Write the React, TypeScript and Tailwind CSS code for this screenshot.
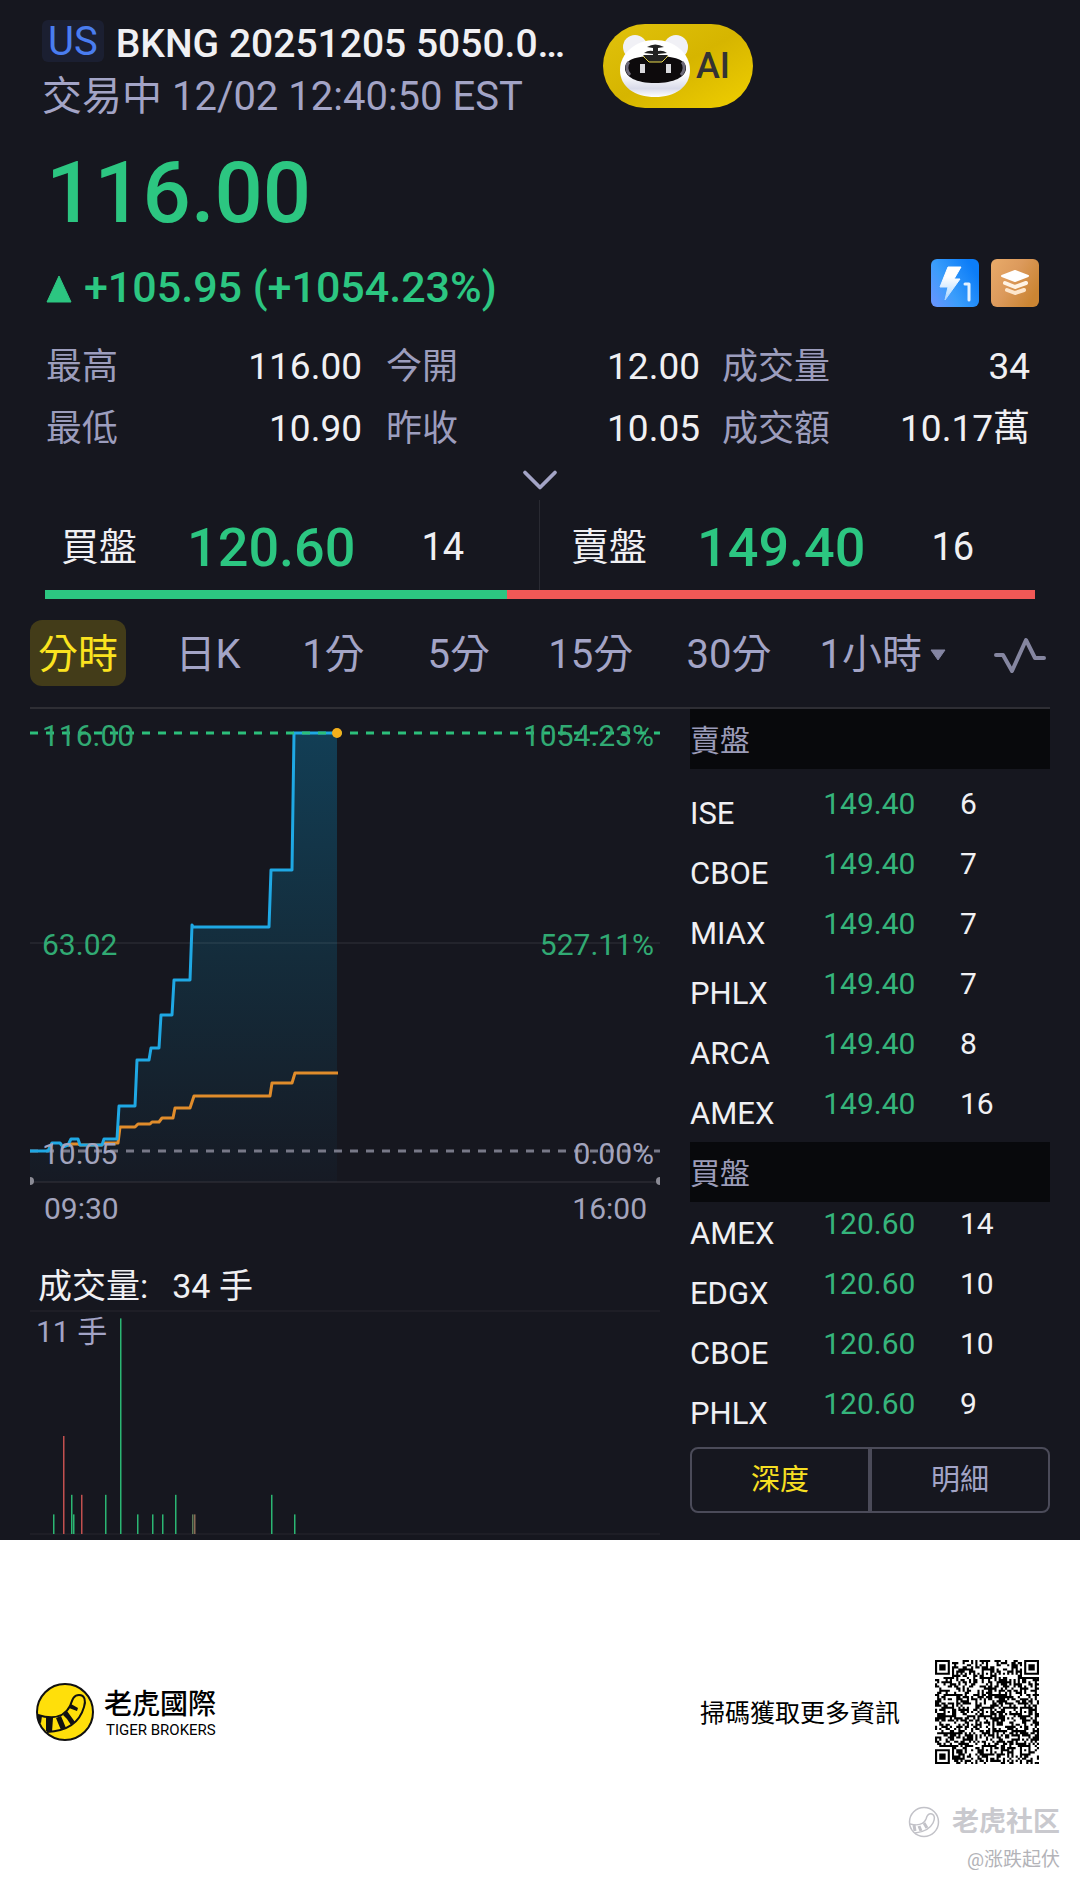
import { ChevronDown } from 'lucide-react';

const stats = [
  [
    { label: '最高', value: '116.00' },
    { label: '今開', value: '12.00' },
    { label: '成交量', value: '34' },
  ],
  [
    { label: '最低', value: '10.90' },
    { label: '昨收', value: '10.05' },
    { label: '成交額', value: '10.17萬' },
  ],
];

const statPadding = ['p-0 pr-3', 'p-0 pl-3 pr-0.5', 'p-0 pl-5'];

const bid = { label: '買盤', price: '120.60', size: 14 };
const ask = { label: '賣盤', price: '149.40', size: 16 };

const periods = ['日K', '1分', '5分', '15分', '30分'];

const asks = [
  { venue: 'ISE', price: '149.40', size: 6 },
  { venue: 'CBOE', price: '149.40', size: 7 },
  { venue: 'MIAX', price: '149.40', size: 7 },
  { venue: 'PHLX', price: '149.40', size: 7 },
  { venue: 'ARCA', price: '149.40', size: 8 },
  { venue: 'AMEX', price: '149.40', size: 16 },
];

const bids = [
  { venue: 'AMEX', price: '120.60', size: 14 },
  { venue: 'EDGX', price: '120.60', size: 10 },
  { venue: 'CBOE', price: '120.60', size: 10 },
  { venue: 'PHLX', price: '120.60', size: 9 },
];

const GREEN = '#2bb673';
const RED = '#c2504f';

const volumes = [
  { x: 23, lots: 1, color: GREEN },
  { x: 33, lots: 5, color: RED },
  { x: 41, lots: 2, color: GREEN },
  { x: 43, lots: 1, color: GREEN },
  { x: 51, lots: 2, color: RED },
  { x: 75, lots: 2, color: GREEN },
  { x: 90, lots: 11, color: GREEN },
  { x: 107, lots: 1, color: GREEN },
  { x: 122, lots: 1, color: GREEN },
  { x: 132, lots: 1, color: GREEN },
  { x: 145, lots: 2, color: GREEN },
  { x: 162, lots: 1, color: '#5d7a58' },
  { x: 164, lots: 1, color: '#8a6a55' },
  { x: 241, lots: 2, color: GREEN },
  { x: 264, lots: 1, color: GREEN },
];

const pricePoints =
  '0,442 18,442 22,434 30,434 33,438 38,436 41,430 48,430 50,436 72,436 74,430 87,430 89,397 105,397 107,351 119,351 121,339 129,339 131,306 142,306 144,271 160,271 162,216 163,218 239,218 241,161 262,161 264,24 307,24';
const averagePoints =
  '38,437 41,435 48,435 50,436 72,436 74,434 88,434 90,418 105,418 108,415 120,415 122,413 129,413 132,409 143,409 145,399 160,399 164,387 240,387 242,374 262,374 265,364 308,364';

function TigerBot() {
  return (
    <svg viewBox="0 0 70 64" className="w-[70px] h-16" aria-hidden="true">
      <defs>
        <linearGradient id="bot-head" x1="0" y1="0" x2="0" y2="1">
          <stop offset="0.6" stopColor="#ffffff" />
          <stop offset="0.85" stopColor="#d9dbea" />
          <stop offset="1" stopColor="#ffffff" />
        </linearGradient>
      </defs>
      <circle cx="15" cy="13" r="12" fill="#f1f1f6" />
      <circle cx="56" cy="13" r="12" fill="#f1f1f6" />
      <path d="M35 6C54 6 70 19 70 36C70 53 55 63 35 63S0 53 0 36C0 19 16 6 35 6Z" fill="url(#bot-head)" />
      <path d="M5 34C5 26 15 22 35 22S66 26 66 34C66 43 54 49 35 49S5 43 5 34Z" fill="#0d0a0c" />
      <path d="M9 28C6 31 6 37 10 41M62 28C65 31 65 37 61 41" fill="none" stroke="#6d6a78" strokeWidth="3" />
      <path d="M23 21L29 28H42L48 21Z" fill="#222" />
      <path d="M23 22L29 28H42L48 22" fill="none" stroke="#e8d84a" strokeWidth="1" />
      <path d="M27 13Q35 8 44 13L38 14V17Q43 16 47 19L38 20V22Q44 21 46 24L41 26H29L25 24Q28 21 33 22V20L24 19Q28 16 33 17V14Z" fill="#222" />
      <rect x="20" y="30" width="5" height="9" fill="#d9d9dd" />
      <rect x="46" y="30" width="5" height="9" fill="#d9d9dd" />
    </svg>
  );
}

function LightningBadge() {
  return (
    <svg viewBox="0 0 48 48" className="w-12 h-12" aria-hidden="true">
      <defs>
        <linearGradient id="flash-bg" x1="0" y1="1" x2="1" y2="0.4">
          <stop offset="0" stopColor="#6c94ff" />
          <stop offset="0.45" stopColor="#3a9dfb" />
          <stop offset="1" stopColor="#0c7df8" />
        </linearGradient>
        <linearGradient id="flash" x1="0" y1="0" x2="0" y2="1">
          <stop offset="0.3" stopColor="#ffffff" />
          <stop offset="1" stopColor="#a9d4ff" />
        </linearGradient>
      </defs>
      <rect width="48" height="48" rx="6" fill="url(#flash-bg)" />
      <path d="M17 8H30L23 20H29L14 41L17 28H9Z" fill="url(#flash)" stroke="url(#flash)" strokeWidth="1" strokeLinejoin="round" />
      <path d="M34 25H38V41" fill="none" stroke="#e4f1ff" strokeWidth="3" strokeLinecap="round" strokeLinejoin="round" />
    </svg>
  );
}

function LayersBadge() {
  return (
    <svg viewBox="0 0 48 48" className="w-12 h-12" aria-hidden="true">
      <defs>
        <linearGradient id="layers-bg" x1="0" y1="0" x2="1" y2="0.6">
          <stop offset="0" stopColor="#e9ab6a" />
          <stop offset="0.5" stopColor="#dc9a5c" />
          <stop offset="1" stopColor="#cb8533" />
        </linearGradient>
      </defs>
      <rect width="48" height="48" rx="6" fill="url(#layers-bg)" />
      <path d="M24 12L37 17L24 22L11 17Z" fill="#fff" stroke="#fff" strokeWidth="2" strokeLinejoin="round" />
      <path d="M14 24L24 28L35 24" fill="none" stroke="#fff3e4" strokeWidth="4" strokeLinecap="round" strokeLinejoin="round" />
      <path d="M16 31L24 34L33 31" fill="none" stroke="#fde6cc" strokeWidth="4" strokeLinecap="round" strokeLinejoin="round" />
    </svg>
  );
}

function Quote({ label, price, size }: { label: string; price: string; size: number }) {
  return (
    <>
      <span className="text-[38px]">{label}</span>
      <span className="ml-[50px] text-[54px] font-medium text-[#2cc681]">{price}</span>
      <span className="ml-[66px] text-[38px]">{size}</span>
    </>
  );
}

function PriceChart() {
  return (
    <svg viewBox="0 0 630 549" className="block w-full font-['Roboto',sans-serif]" role="img" aria-label="分時">
      <defs>
        <linearGradient id="area" x1="0" y1="0" x2="0" y2="1">
          <stop offset="0" stopColor="#123e55" />
          <stop offset="0.5" stopColor="#142c3b" />
          <stop offset="1" stopColor="#161a24" />
        </linearGradient>
      </defs>
      <polygon points={`${pricePoints} 307,473 0,473`} fill="url(#area)" />
      <line x1="0" y1="234" x2="630" y2="234" stroke="#ffffff" strokeOpacity="0.12" />
      <line x1="0" y1="473" x2="630" y2="473" stroke="#34353d" />
      <circle cx="0" cy="472" r="4" fill="#8b8b95" />
      <circle cx="630" cy="472" r="4" fill="#8b8b95" />
      <line x1="0" y1="442" x2="630" y2="442" stroke="#777887" strokeWidth="3" strokeDasharray="8 8" />
      <polyline points={averagePoints} fill="none" stroke="#e08c2b" strokeWidth="3" strokeLinejoin="round" />
      <polyline points={pricePoints} fill="none" stroke="#1fa8e4" strokeWidth="3" strokeLinejoin="round" />
      <line x1="0" y1="24" x2="630" y2="24" stroke="#2cbf7b" strokeWidth="3" strokeDasharray="8 8" />
      <circle cx="307" cy="24" r="5" fill="#f3b01c" />
      <g fontSize="30" fill="#31aa73">
        <text x="12" y="37">116.00</text>
        <text x="12" y="246">63.02</text>
        <text x="624" y="37" textAnchor="end">1054.23%</text>
        <text x="624" y="246" textAnchor="end">527.11%</text>
      </g>
      <g fontSize="30" fill="#a3a4bd">
        <text x="12" y="455">10.05</text>
        <text x="624" y="455" textAnchor="end">0.00%</text>
        <text x="14" y="510">09:30</text>
        <text x="617" y="510" textAnchor="end">16:00</text>
      </g>
    </svg>
  );
}

function VolumeChart() {
  return (
    <svg viewBox="0 0 630 230" className="block w-full font-['Roboto','Noto_Sans_CJK_TC',sans-serif]" role="img" aria-label="成交量">
      <line x1="0" y1="1" x2="630" y2="1" stroke="#26272f" />
      <line x1="0" y1="224" x2="630" y2="224" stroke="#26272f" />
      <text x="6" y="32" fontSize="30" fill="#a3a4c6">11 手</text>
      {volumes.map((bar) => (
        <rect key={bar.x} x={bar.x} y={224 - bar.lots * 19.6} width="1.5" height={bar.lots * 19.6} fill={bar.color} />
      ))}
    </svg>
  );
}

function BookHeading({ id, title }: { id: string; title: string }) {
  return (
    <h3 id={id} className="h-[60px] bg-[#08090c] text-[30px] leading-[64px] text-[#9b9cb8]">
      {title}
    </h3>
  );
}

function BookTable({ labelledBy, rows }: { labelledBy: string; rows: typeof asks }) {
  return (
    <table aria-labelledby={labelledBy} className="w-full table-fixed border-collapse text-left">
      <tbody>
        {rows.map((row) => (
          <tr key={row.venue} className="h-[60px] align-top text-[30px] leading-9">
            <th scope="row" className="w-[37%] p-0 pt-3.5 text-[31px] font-normal">{row.venue}</th>
            <td className="w-[38%] p-0 pt-1 text-[#35b47b]">{row.price}</td>
            <td className="p-0 pt-1">{row.size}</td>
          </tr>
        ))}
      </tbody>
    </table>
  );
}

function TigerLogo() {
  return (
    <svg viewBox="0 0 58 58" className="w-[58px] h-[58px]" aria-hidden="true">
      <circle cx="29" cy="29" r="28" fill="#ffdf0a" stroke="#111" strokeWidth="2" />
      <path d="M2 32C18 37 29 33 34 23C36 18 37 12 43 12C49 12 50 18 48 24C44 38 33 48 11 49" fill="none" stroke="#111" strokeWidth="2" />
      <path d="M1 31L6 33L5 40L2 39ZM10 34L17 35L16 49L10 48ZM20 35L25 33L30 45L25 47L22 40ZM27 32L31 28L39 39L35 42L31 36ZM33 25L35 21L42 25L41 28Z" fill="#111" />
    </svg>
  );
}

const QR_SIZE = 49;

function qrModule(x: number, y: number) {
  const corners = [[0, 0], [QR_SIZE - 7, 0], [0, QR_SIZE - 7]];
  for (const [cx, cy] of corners) {
    const dx = x - cx;
    const dy = y - cy;
    if (dx >= -1 && dx <= 7 && dy >= -1 && dy <= 7) {
      const ring = Math.max(Math.abs(dx - 3), Math.abs(dy - 3));
      return ring !== 2 && ring !== 4;
    }
  }
  // alignment marks
  for (const cx of [6, 24, 42]) {
    for (const cy of [6, 24, 42]) {
      const ring = Math.max(Math.abs(x - cx), Math.abs(y - cy));
      if (ring <= 2) return ring !== 1;
    }
  }
  if (x === 6 || y === 6) return (x + y) % 2 === 0;
  let h = (Math.imul(x + 11, 374761393) + Math.imul(y + 5, 668265263)) | 0;
  h = Math.imul(h ^ (h >>> 13), 1274126177);
  h = Math.imul(h ^ (h >>> 15), 2246822519);
  return ((h ^ (h >>> 16)) & 1) === 1;
}

function QrCode() {
  let d = '';
  for (let y = 0; y < QR_SIZE; y++) {
    for (let x = 0; x < QR_SIZE; x++) {
      if (qrModule(x, y)) d += `M${x} ${y}h1v1h-1z`;
    }
  }
  return (
    <svg viewBox="0 0 49 49" className="w-[104px] h-[104px]" role="img" aria-label="QR code">
      <path d={d} fill="#000" />
    </svg>
  );
}

export default function App() {
  const bidShare = (bid.size / (bid.size + ask.size)) * 100;

  return (
    <div className="min-h-screen bg-white font-['Roboto','Noto_Sans_CJK_TC',sans-serif]">
      <main className="bg-[#16171f] text-[#f0f0f3]">
        <header className="flex items-start px-[42px] pt-5">
          <div className="w-[561px]">
            <div className="flex items-start gap-3">
              <span className="h-[42px] rounded-md bg-[#1b1f31] px-1.5 text-[40px] leading-[44px] text-[#4a7df0]">US</span>
              <h1 className="whitespace-nowrap text-[39px] font-medium leading-12">BKNG 20251205 5050.0…</h1>
            </div>
            <p className="mt-[5px] text-[40px] leading-12 text-[#a3a4c6]">交易中 12/02 12:40:50 EST</p>
          </div>
          <button className="mt-1 flex h-[84px] w-[150px] items-center rounded-full bg-linear-to-br from-[#e0c20c] via-[#d6b500] to-[#f0cf00] pl-[17px]">
            <TigerBot />
            <span className="ml-1.5 text-[36px] font-medium text-[#333]">AI</span>
          </button>
        </header>

        <section className="pl-[46px] pr-[50px]">
          <p className="mt-[22px] text-[85px] font-medium leading-[100px] text-[#2cc681]">116.00</p>
          <div className="-mr-3 mt-4 flex items-start justify-between pr-[3px]">
            <p className="flex items-center gap-3 text-[43px] font-medium leading-14 text-[#2cc681]">
              <svg viewBox="0 0 26 28" className="mt-1 h-7 w-[26px]" aria-hidden="true">
                <path d="M13 1L25 27H1Z" fill="#2cc681" stroke="#2cc681" strokeLinejoin="round" />
              </svg>
              +105.95 (+1054.23%)
            </p>
            <div className="flex gap-3">
              <button aria-label="Level 1"><LightningBadge /></button>
              <button aria-label="Depth"><LayersBadge /></button>
            </div>
          </div>

          <table className="mt-[21px] w-full table-fixed text-[37px] leading-[62px]">
            <tbody>
              {stats.map((row, i) => (
                <tr key={i}>
                  {row.map((item, j) => (
                    <td key={item.label} className={statPadding[j]}>
                      <div className="flex items-baseline justify-between">
                        <span className="text-[36px] text-[#9c9dbd]">{item.label}</span>
                        <span>{item.value}</span>
                      </div>
                    </td>
                  ))}
                </tr>
              ))}
            </tbody>
          </table>
        </section>

        <button className="flex h-10 w-full items-center justify-center text-[#a3a4c6]" aria-label="展開">
          <ChevronDown className="h-[60px] w-[60px] shrink-0" strokeWidth={1.5} />
        </button>

        <section className="px-[45px]">
          <div className="grid h-[90px] grid-cols-2">
            <div className="flex items-center border-r border-[#292a32] pl-4 pt-1">
              <Quote {...bid} />
            </div>
            <div className="flex items-center pl-[31px] pt-1">
              <Quote {...ask} />
            </div>
          </div>
          <div className="flex h-[9px] bg-[#f15856]">
            <div className="bg-[#2cc681]" style={{ width: `${bidShare}%` }} />
          </div>
        </section>

        <nav className="mx-[30px] mt-[21px] flex items-center border-b-2 border-[#2e2e34] pb-[21px] text-[40px] leading-[62px] text-[#a3a4c6]">
          <button className="w-24 rounded-xl bg-[#433c19] pt-1 text-[#fbe31f]">分時</button>
          <div className="ml-[46px] flex flex-1 justify-between pt-1">
            {periods.map((period) => (
              <button key={period} className="min-w-[72px]">{period}</button>
            ))}
          </div>
          <button className="ml-12 flex items-center gap-2 pt-1">
            1小時
            <svg viewBox="0 0 16 12" className="h-3 w-4" aria-hidden="true">
              <path d="M1 1H15L8 11Z" fill="#8586a3" stroke="#8586a3" strokeLinejoin="round" />
            </svg>
          </button>
          <button className="ml-12 pr-1" aria-label="指標">
            <svg viewBox="0 0 52 36" className="mt-1 h-9 w-[52px]" aria-hidden="true">
              <path d="M2 18H9L18 34L32 3L41 21H50" fill="none" stroke="#8586a0" strokeWidth="4" strokeLinecap="round" strokeLinejoin="round" />
            </svg>
          </button>
        </nav>

        <div className="grid grid-cols-[630fr_360fr] gap-[30px] px-[30px]">
          <section>
            <PriceChart />
            <h2 className="flex gap-6 pl-2 pt-1 text-[34px] leading-12">
              <span>成交量:</span>
              <span>34 手</span>
            </h2>
            <VolumeChart />
          </section>

          <section>
            <BookHeading id="asks" title="賣盤" />
            <div className="pt-[13px]">
              <BookTable labelledBy="asks" rows={asks} />
            </div>
            <BookHeading id="bids" title="買盤" />
            <BookTable labelledBy="bids" rows={bids} />
            <div className="mt-[5px] grid grid-cols-2 rounded-lg border-2 border-[#4b4b59] text-[29px] leading-[62px]">
              <button className="border-r-2 border-[#4b4b59] text-[#f6df22]">深度</button>
              <button className="border-l-2 border-[#4b4b59] text-[#a3a4c6]">明細</button>
            </div>
          </section>
        </div>
      </main>

      <footer className="text-black">
        <div className="flex items-center justify-between pt-[120px] pl-9 pr-[41px]">
          <div className="flex items-center gap-2.5">
            <TigerLogo />
            <div className="pt-1">
              <p className="text-[28px] font-medium leading-8">老虎國際</p>
              <p className="pl-0.5 text-[15px] leading-[18px]">TIGER BROKERS</p>
            </div>
          </div>
          <div className="flex items-center gap-[35px]">
            <p className="pt-1 text-[25px]">掃碼獲取更多資訊</p>
            <QrCode />
          </div>
        </div>
        <div className="mt-10 flex flex-col items-end pr-5 font-['Roboto','Noto_Sans_CJK_SC',sans-serif]">
          <p className="flex items-center gap-3 text-[27px] font-bold leading-9 text-[#c9c9ce]">
            <svg viewBox="0 0 32 32" className="h-8 w-8" fill="none" stroke="#c2c2c8" aria-hidden="true">
              <circle cx="16" cy="16" r="14.5" strokeWidth="1.5" />
              <path d="M2 18C10 20 16 18 18 13C19 9 21 7 24 8C27 9 27 13 25 17C22 23 17 26 7 27" strokeWidth="1.5" />
              <path d="M6 19L7 25M11 20L13 25M16 17L19 22" strokeWidth="3" />
            </svg>
            老虎社区
          </p>
          <p className="mt-1.5 text-[19px] leading-7 text-[#b3b3b8]">@涨跌起伏</p>
        </div>
      </footer>
    </div>
  );
}
